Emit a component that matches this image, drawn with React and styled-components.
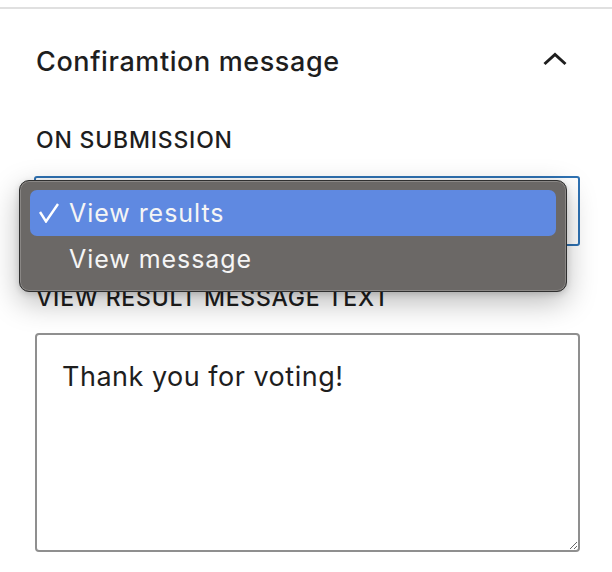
import React from "react";
import styled, { createGlobalStyle } from "styled-components";

const GlobalStyle = createGlobalStyle`
  html, body {
    margin: 0;
    padding: 0;
    background: #ffffff;
  }
  body {
    font-family: Inter, "Noto Sans", "Liberation Sans", sans-serif;
    color: #1e1e1e;
  }
`;

// Panel
const Page = styled.div`
  padding-top: 7px;
`;

const Panel = styled.section`
  border-top: 2px solid #e0e0e0;
  padding: 37px 32px 0 35px;
`;

const Header = styled.div`
  display: flex;
  align-items: flex-start;
  justify-content: space-between;
  padding-right: 13px;
`;

const Title = styled.h2`
  margin: 0 0 0 1px;
  font-size: 27px;
  line-height: 32px;
  letter-spacing: 0.6px;
  font-weight: 500;
  color: #1e1e1e;
`;

const ChevronIcon = styled.svg`
  margin-top: 6px;
`;

const Label = styled.div`
  margin: ${(p) => p.$top}px 0 0 1px;
  font-size: 23px;
  line-height: 28px;
  letter-spacing: 0.8px;
  font-weight: 500;
  text-transform: uppercase;
  color: #1e1e1e;
`;

// Select with its open menu
const SelectWrap = styled.div`
  position: relative;
  margin-top: 22px;
`;

const SelectBox = styled.div`
  box-sizing: border-box;
  height: 70px;
  margin-left: -1px;
  border: 2px solid #2f72b3;
  border-radius: 3px;
  background: #fff;
`;

const Menu = styled.div`
  position: absolute;
  left: -16px;
  top: 4px;
  width: 548px;
  box-sizing: border-box;
  padding: 9px 10px;
  background: #6b6866;
  border: 1px solid #2f2f2f;
  border-radius: 10px;
  box-shadow: inset 0 0 0 1px #8a8785, 0 10px 30px rgba(0, 0, 0, 0.28),
    0 2px 6px rgba(0, 0, 0, 0.15);
  z-index: 2;
`;

const Option = styled.div`
  display: flex;
  align-items: center;
  height: 46px;
  padding-left: 9px;
  border-radius: 7px;
  background: ${(p) => (p.$active ? "#5f89e1" : "transparent")};
  color: #f5f5f5;
  font-size: 25px;
  letter-spacing: 0.95px;
  font-weight: 400;
`;

const CheckSlot = styled.span`
  display: inline-flex;
  width: 30px;
  align-items: center;
`;

// Textarea
const MessageArea = styled.textarea`
  display: block;
  box-sizing: border-box;
  width: 100%;
  height: 219px;
  margin-top: 21px;
  padding: 26px 25px;
  border: 2px solid #8f8f8f;
  border-radius: 4px;
  font-family: Inter, "Noto Sans", "Liberation Sans", sans-serif;
  font-size: 27px;
  line-height: 32px;
  letter-spacing: 0.5px;
  color: #1e1e1e;
  background: #fff;
  outline: none;
  resize: vertical;
`;

const options = [
  { label: "View results", active: true },
  { label: "View message", active: false },
];

export default function App() {
  return (
    <Page>
      <GlobalStyle />
      <Panel>
        <Header>
          <Title>Confiramtion message</Title>
          <ChevronIcon width="24" height="14" viewBox="0 0 24 14">
            <polyline
              points="1.5,12 12,2.5 22.5,12"
              fill="none"
              stroke="#1e1e1e"
              strokeWidth="3"
            />
          </ChevronIcon>
        </Header>

        <Label $top={48}>On submission</Label>
        <SelectWrap>
          <SelectBox />
          <Menu>
            {options.map((o) => (
              <Option key={o.label} $active={o.active}>
                <CheckSlot>
                  {o.active && (
                    <svg width="20" height="20" viewBox="0 0 20 20">
                      <polyline
                        points="1,9 7,18.5 19,1"
                        fill="none"
                        stroke="#ffffff"
                        strokeWidth="2.4"
                      />
                    </svg>
                  )}
                </CheckSlot>
                {o.label}
              </Option>
            ))}
          </Menu>
        </SelectWrap>

        <Label $top={38}>View result message text</Label>
        <MessageArea defaultValue="Thank you for voting!" />
      </Panel>
    </Page>
  );
}
